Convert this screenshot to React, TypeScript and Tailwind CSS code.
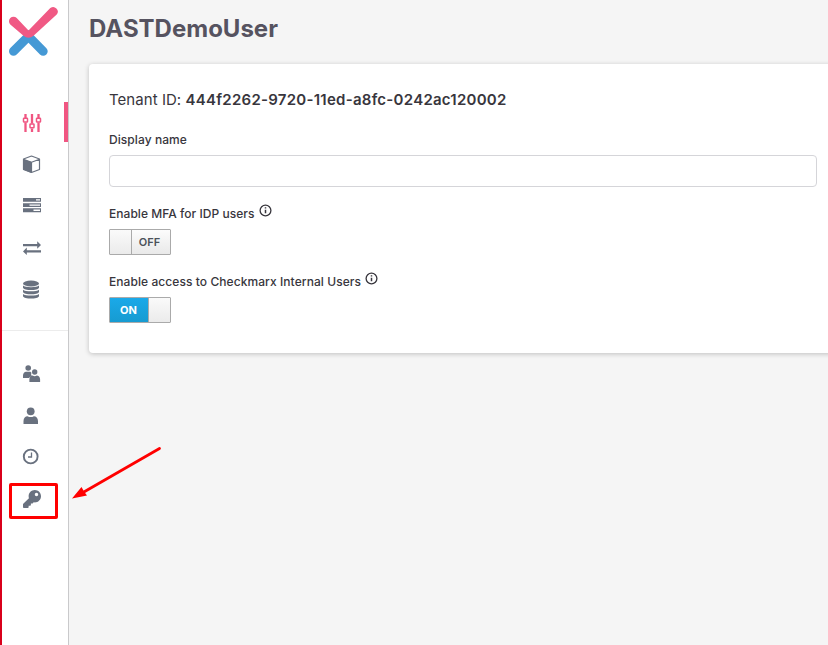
import type { ReactNode } from "react";
import { FaKey } from "react-icons/fa";

const Icon = ({ children }: { children: ReactNode }) => (
  <svg width="20" height="20" viewBox="0 0 20 20" fill="none" className="overflow-visible">
    {children}
  </svg>
);

const Sliders = () => (
  <Icon>
    <g stroke="currentColor" strokeWidth="2.300">
      <path d="M3.500 2v4M3.500 10.500V20M10 2v9.500M10 16.500V20M16.500 2v4M16.500 10.500V20" />
    </g>
    <g stroke="currentColor" strokeWidth="1.500">
      <rect x="1.500" y="6.200" width="4" height="3.800" rx=".6" />
      <rect x="8" y="12" width="4" height="3.800" rx=".6" />
      <rect x="14.500" y="6.200" width="4" height="3.800" rx=".6" />
    </g>
  </Icon>
);

const Cube = () => (
  <Icon>
    <path d="M1 5.300 9.500 8v11L1 15.500z" fill="currentColor" />
    <path d="M1.500 5 9.500 2l8 3v10.500l-8 3-8-3zM9.500 8.200l8-3M9.500 8.200l-8-3M9.500 8v10.500" stroke="currentColor" strokeWidth="1.200" strokeLinejoin="round" />
  </Icon>
);

const Servers = () => (
  <Icon>
    <path d="M1 2h18v3.800H1zM1 7.200h18V11H1zM1 12.300h18v3.900H1z" fill="currentColor" />
    <path d="M14 3.300h4v1.300h-4zM7.500 8.500H18v1.300H7.500zM11.500 13.600H18v1.300h-6.500z" fill="#fff" />
  </Icon>
);

const Exchange = () => (
  <Icon>
    <path d="M1 6h14.200V3.200L19 7l-3.800 3.800V8.200H1zM19 12.200H4.800V9.600L1 13.400l3.800 3.700v-2.600H19z" fill="currentColor" />
  </Icon>
);

const Database = () => (
  <Icon>
    <ellipse cx="9" cy="3.500" rx="8" ry="3" fill="currentColor" />
    <path d="M1 5.500c1.800 2.200 14.200 2.200 16 0v2.200c-1 3.100-15 3.100-16 0zM1 9.700c1.800 2.200 14.200 2.200 16 0v2.200c-1 3.100-15 3.100-16 0zM1 13.900c1.800 2.200 14.200 2.200 16 0v2.300c-1 3.200-15 3.200-16 0z" fill="currentColor" />
  </Icon>
);

const Users = () => (
  <Icon>
    <circle cx="6.200" cy="4" r="2.800" fill="currentColor" />
    <path d="M1 14V11.500C1 9 2.700 7.700 4 7.700h4.400l1.100 1.100c-.7 2-.2 2.700.5 3.400-1.500.4-2.500 1-3 1.800z" fill="currentColor" />
    <circle cx="12.700" cy="8" r="2.700" fill="currentColor" />
    <path d="M7.400 18v-2.700c0-2.300 1.700-3.700 3.200-3.700 1.300.8 2.900.8 4.200 0 1.600 0 3.300 1.400 3.300 3.700V18z" fill="currentColor" />
  </Icon>
);

const User = () => (
  <Icon>
    <circle cx="8.700" cy="5.300" r="3.900" fill="currentColor" />
    <path d="M1.500 18v-3c0-3 1.900-4.800 4-4.800 2 1.200 4.400 1.200 6.400 0 2.100 0 4.100 1.800 4.100 4.800v3z" fill="currentColor" />
  </Icon>
);

const Clock = () => (
  <Icon>
    <circle cx="8.700" cy="8.500" r="6.900" stroke="currentColor" strokeWidth="1.900" />
    <path d="M9.500 4.500V9H6" stroke="currentColor" strokeWidth="1.300" />
  </Icon>
);

const Logo = () => (
  <svg width="66" height="62" viewBox="2 0 66 62" fill="none">
    <path d="M13.500 51.300 28.500 36.300l14.700 15" stroke="#4599d5" strokeWidth="9" strokeLinecap="round" />
    <path d="M28.500 30.500 50.300 8.100a4.550 4.550 0 0 1 6.400 6.400L33.800 35.400Q28.500 40.200 23.200 35.400L10.300 24.500a4.500 4.500 0 0 1 6.400-6.400z" fill="#f05984" />
  </svg>
);

const NavItem = ({ children, active = false }: { children: ReactNode; active?: boolean }) => (
  <a className={`flex h-10 items-center justify-between pl-5 ${active ? "text-[#f05682]" : "text-[#69717f]"}`}>
    {children}
    {active && <span className="h-10 w-1 bg-[#f05682]" />}
  </a>
);

const Info = () => (
  <svg width="13" height="13" viewBox="0 0 13 13" fill="none" stroke="#38363d" className="-mt-[7px] ml-1">
    <circle cx="6.500" cy="6.500" r="5.400" strokeWidth="1.300" />
    <path d="M6.500 5.700v3.600M6.500 3.300v1.300" strokeWidth="1.500" />
  </svg>
);

const Toggle = ({ on }: { on: boolean }) => (
  <div className="flex h-[26px] w-[62px] overflow-hidden rounded-[1px] border border-[#aaa] text-[11px] leading-6 font-semibold">
    {on ? (
      <>
        <span className="w-[38px] bg-linear-to-b from-[#1aa9e9] to-[#179bd1] pr-px text-center font-bold text-white">ON</span>
        <span className="flex-1 border-l border-[#aaa] bg-linear-to-b from-[#fafafa] to-[#ebebeb]" />
      </>
    ) : (
      <>
        <span className="w-[22px] border-r border-[#aaa] bg-linear-to-b from-[#fafafa] to-[#ebebeb]" />
        <span className="flex-1 bg-linear-to-b from-[#fcfcfc] to-[#e9e9e9] pr-[3px] text-center text-[#4c525a]">OFF</span>
      </>
    )}
  </div>
);

export default function App() {
  return (
    <div className="relative flex h-[645px] w-[828px] overflow-hidden bg-[#f5f5f5] font-['Inter',sans-serif] text-[#38363d]">
      <aside className="flex w-[69px] shrink-0 flex-col border-r border-l-2 border-r-[#c9c9cb] border-l-[#d9001b] bg-white">
        <Logo />
        <nav className="mt-10 flex flex-col gap-0.5">
          <NavItem active><Sliders /></NavItem>
          <NavItem><Cube /></NavItem>
          <NavItem><Servers /></NavItem>
          <NavItem><Exchange /></NavItem>
          <NavItem><Database /></NavItem>
        </nav>
        <hr className="mt-5 border-[#ececec]" />
        <nav className="mt-[23px] flex flex-col gap-0.5">
          <NavItem><Users /></NavItem>
          <NavItem><User /></NavItem>
          <NavItem><Clock /></NavItem>
          <NavItem><FaKey size={18} className="mb-0.5 ml-px" /></NavItem>
        </nav>
      </aside>

      <main className="flex-1 pl-5">
        <h1 className="pt-[13px] text-2xl leading-8 font-bold text-[#565360]">DASTDemoUser</h1>
        <section className="mt-[19px] -mr-5 h-[289px] rounded bg-white pt-[26px] pr-[31px] pl-5 shadow-[0_1px_5px_rgba(0,0,0,0.22)]">
          <p className="text-[15px] leading-5">
            <span className="tracking-[0.05px]">Tenant ID: </span>
            <b className="font-semibold tracking-[0.26px]">444f2262-9720-11ed-a8fc-0242ac120002</b>
          </p>
          <label className="mt-[22px] block text-xs font-medium tracking-[0.07px]">Display name</label>
          <input className="mt-[7px] block h-8 w-[708px] rounded border border-[#d5d5d9] bg-white outline-none" />
          <div className="mt-[19px] flex h-4 items-center text-xs font-medium tracking-[0.04px]">
            Enable MFA for IDP users
            <Info />
          </div>
          <div className="mt-[7px]"><Toggle on={false} /></div>
          <div className="mt-[19px] flex h-4 items-center text-xs font-medium tracking-[0.07px]">
            Enable access to Checkmarx Internal Users
            <Info />
          </div>
          <div className="mt-[7px]"><Toggle on /></div>
        </section>
      </main>

      <div className="absolute top-[483px] left-[9px] h-9 w-[49px] rounded-[2px] border-3 border-[#ff0000]" />
      <svg className="absolute top-[440px] left-[65px]" width="105" height="65" viewBox="65 440 105 65">
        <path d="M159.500 448.500 83 492.500" stroke="#ff0000" strokeWidth="2.800" strokeLinecap="round" />
        <path d="M72 498.500 81.500 487l2.500 4.500 3 4z" fill="#ff0000" />
      </svg>
    </div>
  );
}
